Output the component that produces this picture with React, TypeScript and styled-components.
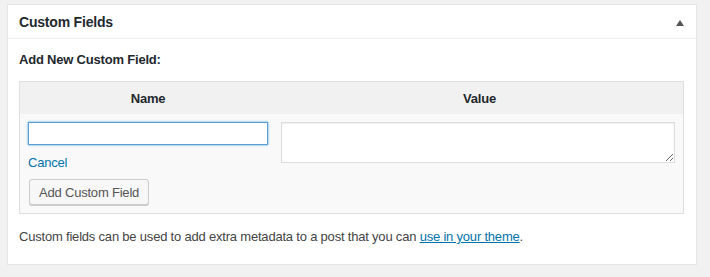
import React from "react";
import styled, { createGlobalStyle } from "styled-components";

const GlobalStyle = createGlobalStyle`
  html, body {
    margin: 0;
    padding: 0;
    background: #f1f1f1;
    font-family: "Liberation Sans", Arial, sans-serif;
    font-size: 13px;
    letter-spacing: -0.2px;
    color: #444;
  }
`;

const Page = styled.div`
  padding: 4px 13px 0 7px;
`;

const Postbox = styled.div`
  background: #fff;
  border: 1px solid #e5e5e5;
  box-shadow: 0 1px 1px rgba(0, 0, 0, 0.04);
`;

const Header = styled.div`
  display: flex;
  align-items: center;
  justify-content: space-between;
  height: 33px;
  padding: 0 12px 0 11px;
  border-bottom: 1px solid #eee;
`;

const Title = styled.h2`
  margin: 0;
  font-size: 14px;
  font-weight: bold;
  color: #23282d;
`;

const Toggle = styled.span`
  width: 0;
  height: 0;
  border-left: 4px solid transparent;
  border-right: 4px solid transparent;
  border-bottom: 6px solid #555;
  margin-top: 2px;
`;

const Inside = styled.div`
  padding: 13px 12px 20px 11px;
`;

const Label = styled.p`
  margin: 0 0 14px;
  font-weight: bold;
  color: #23282d;
  line-height: 15px;
`;

const Table = styled.table`
  width: 100%;
  border: 1px solid #dfdfdf;
  border-spacing: 0;
  background: #f9f9f9;
`;

const Th = styled.th<{ $width?: number }>`
  width: ${(p) => (p.$width ? `${p.$width}px` : "auto")};
  height: 32px;
  padding: 0;
  background: #f1f1f1;
  font-weight: bold;
  color: #23282d;
  text-align: center;
`;

const Td = styled.td<{ $pl: number }>`
  vertical-align: top;
  padding: 8px 8px 8px ${(p) => p.$pl}px;
`;

const NameInput = styled.input`
  display: block;
  box-sizing: border-box;
  width: 240px;
  height: 23px;
  margin: 0;
  padding: 2px 5px;
  border: 1px solid #5b9dd9;
  box-shadow: 0 0 2px rgba(30, 140, 190, 0.8);
  outline: none;
  font: 13px "Liberation Sans", Arial, sans-serif;
`;

const ValueArea = styled.textarea`
  display: block;
  box-sizing: border-box;
  width: 100%;
  height: 41px;
  margin: 0;
  border: 1px solid #ddd;
  box-shadow: inset 0 1px 2px rgba(0, 0, 0, 0.07);
  background: #fff;
  resize: vertical;
`;

const CancelLink = styled.a`
  display: block;
  margin: 10px 0 9px;
  color: #0073aa;
  text-decoration: none;
  line-height: 15px;
`;

const Button = styled.button`
  display: block;
  height: 26px;
  padding: 0 9px;
  margin-left: 1px;
  border: 1px solid #ccc;
  border-radius: 3px;
  background: #f7f7f7;
  box-shadow: 0 1px 0 #ccc;
  color: #555;
  font: 13px "Liberation Sans", Arial, sans-serif;
  letter-spacing: -0.2px;
`;

const Note = styled.p`
  margin: 15px 0 0;
  line-height: 15px;
  color: #444;
`;

const ThemeLink = styled.a`
  color: #0073aa;
  text-decoration: underline;
`;

export default function App() {
  return (
    <>
      <GlobalStyle />
      <Page>
        <Postbox>
          <Header>
            <Title>Custom Fields</Title>
            <Toggle />
          </Header>
          <Inside>
            <Label>Add New Custom Field:</Label>
            <Table>
              <thead>
                <tr>
                  <Th $width={256}>Name</Th>
                  <Th>Value</Th>
                </tr>
              </thead>
              <tbody>
                <tr>
                  <Td $pl={8}>
                    <NameInput autoFocus defaultValue="" />
                    <CancelLink href="#">Cancel</CancelLink>
                    <Button>Add Custom Field</Button>
                  </Td>
                  <Td $pl={5}>
                    <ValueArea />
                  </Td>
                </tr>
              </tbody>
            </Table>
            <Note>
              Custom fields can be used to add extra metadata to a post that you can{" "}
              <ThemeLink href="#">use in your theme</ThemeLink>.
            </Note>
          </Inside>
        </Postbox>
      </Page>
    </>
  );
}
